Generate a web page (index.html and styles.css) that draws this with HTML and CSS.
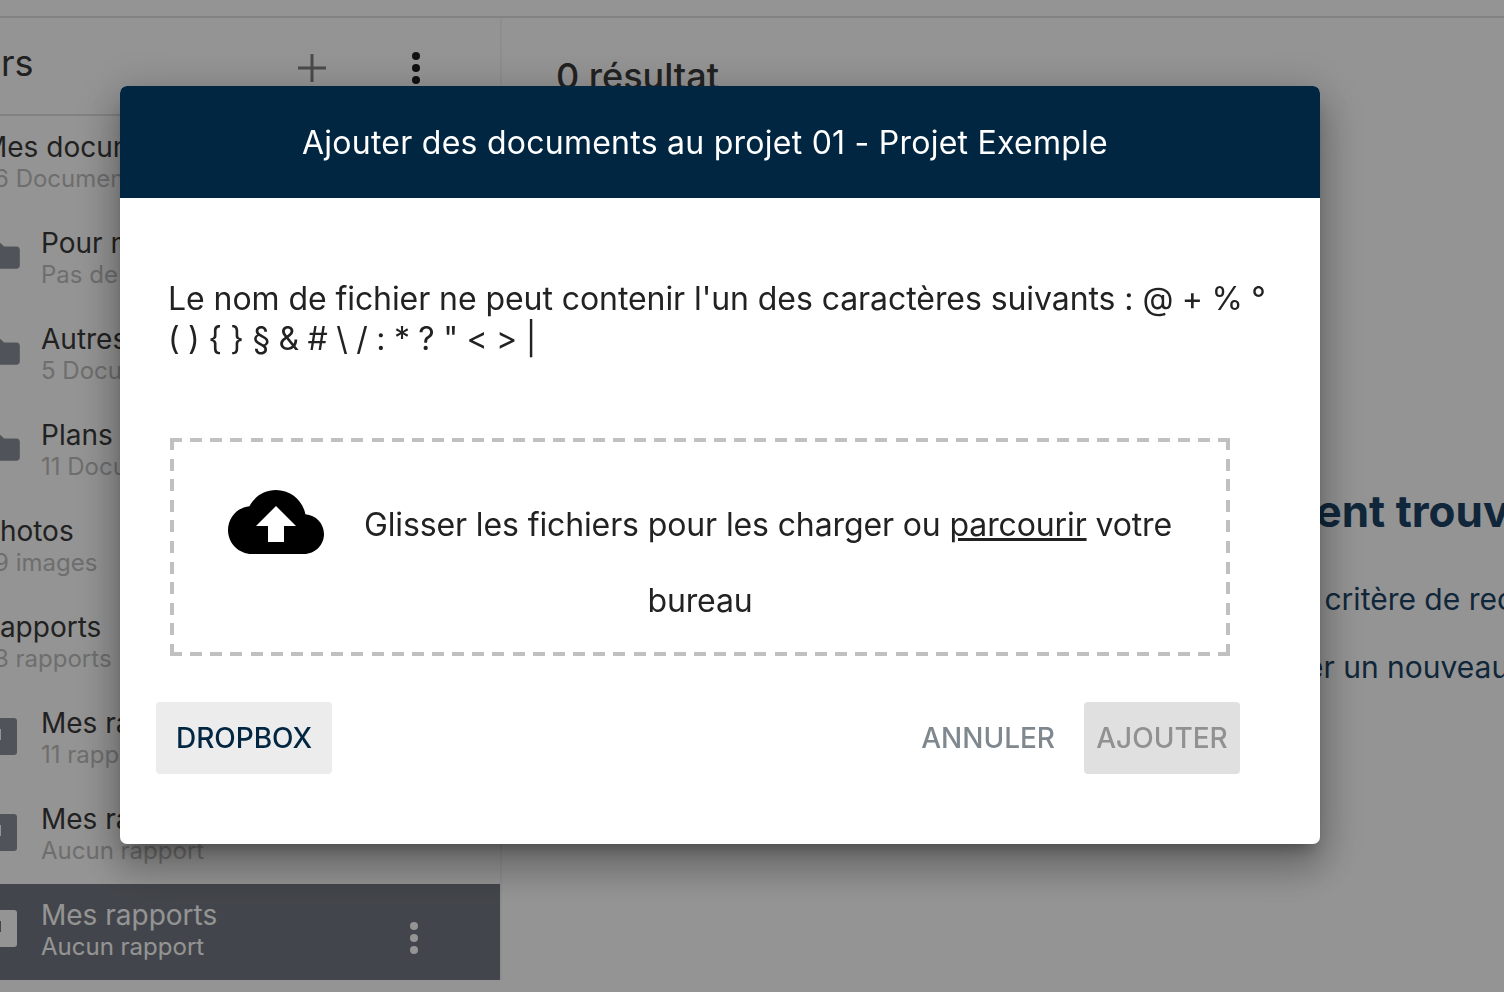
FILE: index.html
```html
<!DOCTYPE html>
<html>
  <head>
    <meta charset="utf-8">
    <link rel="stylesheet" href="styles.css">
  </head>
  <body>
    <div class="page">
      <div class="topbar"></div>
      <div class="columns">
        <div class="sidebar">
          <div class="side_head">
            <span class="side_title">Mes dossiers</span>
            <svg class="plus" viewBox="0 0 28 28"><path d="M12.5 0h3v12.5H28v3H15.5V28h-3V15.5H0v-3h12.5z"/></svg>
            <svg class="dots" viewBox="0 0 8 32"><circle cx="4" cy="4" r="4"/><circle cx="4" cy="16" r="4"/><circle cx="4" cy="28" r="4"/></svg>
          </div>
          <div class="row top">
            <div><div class="name">Mes documents</div><div class="sub">6 Documents</div></div>
          </div>
          <div class="row">
            <svg class="folder" viewBox="0 0 24 24"><path d="M10 4H4c-1.1 0-2 .9-2 2v12c0 1.1.9 2 2 2h16c1.1 0 2-.9 2-2V8c0-1.1-.9-2-2-2h-8l-2-2z"/></svg>
            <div><div class="name">Pour moi</div><div class="sub">Pas de document</div></div>
          </div>
          <div class="row">
            <svg class="folder" viewBox="0 0 24 24"><path d="M10 4H4c-1.1 0-2 .9-2 2v12c0 1.1.9 2 2 2h16c1.1 0 2-.9 2-2V8c0-1.1-.9-2-2-2h-8l-2-2z"/></svg>
            <div><div class="name">Autres documents</div><div class="sub">5 Documents</div></div>
          </div>
          <div class="row">
            <svg class="folder" viewBox="0 0 24 24"><path d="M10 4H4c-1.1 0-2 .9-2 2v12c0 1.1.9 2 2 2h16c1.1 0 2-.9 2-2V8c0-1.1-.9-2-2-2h-8l-2-2z"/></svg>
            <div><div class="name">Plans</div><div class="sub">11 Documents</div></div>
          </div>
          <div class="row top">
            <div><div class="name">Photos</div><div class="sub">9 images</div></div>
          </div>
          <div class="row top">
            <div><div class="name">Rapports</div><div class="sub">3 rapports</div></div>
          </div>
          <div class="row">
            <svg class="doc" viewBox="0 0 30 37"><rect width="30" height="37" rx="3"/><rect class="notch" y="11" width="14" height="11"/></svg>
            <div><div class="name">Mes rapports</div><div class="sub">11 rapports</div></div>
          </div>
          <div class="row">
            <svg class="doc" viewBox="0 0 30 37"><rect width="30" height="37" rx="3"/><rect class="notch" y="11" width="14" height="11"/></svg>
            <div><div class="name">Mes rapports</div><div class="sub">Aucun rapport</div></div>
          </div>
          <div class="row selected">
            <svg class="doc" viewBox="0 0 30 37"><rect width="30" height="37" rx="3"/><rect class="notch" y="11" width="14" height="11"/></svg>
            <div><div class="name">Mes rapports</div><div class="sub">Aucun rapport</div></div>
            <svg class="dots" viewBox="0 0 8 32"><circle cx="4" cy="4" r="4"/><circle cx="4" cy="16" r="4"/><circle cx="4" cy="28" r="4"/></svg>
          </div>
        </div>
        <div class="results">
          <div class="count">0 résultat</div>
          <div class="empty">
            <h2>Aucun document trouvé</h2>
            <p class="hint1">Essayez un autre critère de recherche</p>
            <p class="hint2">Vous pouvez ajouter un nouveau document</p>
          </div>
        </div>
      </div>
    </div>

    <div class="overlay">
      <div class="modal">
        <div class="modal_head">Ajouter des documents au projet 01 - Projet Exemple</div>
        <div class="modal_body">
          <p class="rules">Le nom de fichier ne peut contenir l'un des caractères suivants : <span class="chars">@ + % ° ( ) { } § &amp; # \ / : * ? " &lt; &gt; |</span></p>
          <div class="dropzone">
            <svg class="cloud" viewBox="0 0 24 24"><path d="M19.35 10.04C18.67 6.59 15.64 4 12 4 9.11 4 6.6 5.64 5.35 8.04 2.34 8.36 0 10.91 0 14c0 3.31 2.69 6 6 6h13c2.76 0 5-2.24 5-5 0-2.64-2.05-4.78-4.65-4.96zM14 13v4h-4v-4H7l5-5 5 5h-3z"/></svg>Glisser les fichiers pour les charger ou <u>parcourir</u> votre bureau
          </div>
        </div>
        <div class="modal_foot">
          <button class="btn_dropbox">DROPBOX</button>
          <div class="foot_right">
            <button class="btn_cancel">ANNULER</button>
            <button class="btn_add">AJOUTER</button>
          </div>
        </div>
      </div>
    </div>
  </body>
</html>
```

FILE: styles.css
```css
body {
  margin: 0;
  height: 100vh;
  overflow: hidden;
  background-color: white;
  font-family: Inter, sans-serif;
}

.page {
  margin-left: -120px;
  width: 1800px;
}

.topbar {
  height: 16px;
  border-bottom: 2px solid #e0e0e0;
}

.columns {
  display: flex;
}

.sidebar {
  width: 620px;
  flex-shrink: 0;
  border-right: 2px solid #f4f4f4;
}

.side_head {
  height: 96px;
  display: flex;
  align-items: center;
  border-bottom: 2px solid #e0e0e0;
}

.side_title {
  width: 418px;
  margin-left: -73px;
  margin-bottom: 6px;
  padding-right: 73px;
  font-size: 36px;
  color: #3a3a3a;
  white-space: nowrap;
}

.plus {
  width: 28px;
  height: 28px;
  fill: #808080;
  margin-top: 4px;
}

.side_head .dots {
  margin-left: 86px;
  margin-top: 4px;
  fill: #1c1c1c;
}

.dots {
  width: 8px;
  height: 32px;
  flex-shrink: 0;
}

.row {
  height: 96px;
  box-sizing: border-box;
  display: flex;
  align-items: center;
  padding: 0 82px 3px 105px;
  white-space: nowrap;
}

.row.top {
  padding-left: 102px;
}

.row.top .sub {
  margin-left: 12px;
}

.name {
  font-size: 28px;
  line-height: 33px;
  color: #3a3a3a;
}

.sub {
  font-size: 24px;
  line-height: 30px;
  color: #bebebe;
}

.folder {
  width: 38px;
  height: 38px;
  fill: #8a929b;
  margin-right: 18px;
  margin-bottom: 5px;
  flex-shrink: 0;
}

.doc {
  width: 30px;
  height: 37px;
  fill: #8a929b;
  margin: 0 24px 5px 2px;
  flex-shrink: 0;
}

.notch {
  fill: #fff;
}

.selected {
  background-color: #737881;
}

.selected .name,
.selected .sub {
  color: white;
}

.selected .doc {
  fill: white;
}

.selected .notch {
  fill: #737881;
}

.selected .dots {
  fill: white;
  margin-left: auto;
  margin-top: 15px;
}

.results {
  padding: 36px 0 0 54px;
  white-space: nowrap;
}

.count {
  font-size: 36px;
  font-weight: 500;
  color: #3a3a3a;
}

.empty {
  margin-top: 386px;
  padding-left: 460px;
  color: #1c4364;
}

.empty h2 {
  font-size: 44px;
  font-weight: 700;
  margin: 0 0 42px;
}

.empty p {
  font-size: 30px;
  line-height: 38px;
  margin: 0 0 30px;
}

.hint1 {
  padding-left: 59px;
}

.hint2 {
  padding-left: 29px;
}

.overlay {
  position: fixed;
  top: 0;
  left: 0;
  width: 100%;
  height: 100%;
  background-color: rgba(0, 0, 0, 0.42);
}

.modal {
  position: absolute;
  left: 120px;
  top: 86px;
  width: 1200px;
  height: 758px;
  background-color: white;
  border-radius: 7px;
  overflow: hidden;
  box-shadow: 0 11px 15px -7px rgba(0, 0, 0, 0.3), 0 24px 38px 3px rgba(0, 0, 0, 0.2), 0 9px 46px 8px rgba(0, 0, 0, 0.17);
}

.modal_head {
  height: 112px;
  line-height: 114px;
  background-color: #002642;
  color: white;
  font-size: 32px;
  letter-spacing: 0.25px;
  text-align: center;
  padding-right: 30px;
}

.modal_body {
  padding: 81px 42px 0 48px;
}

.rules {
  margin: 0;
  font-size: 32px;
  letter-spacing: -0.07px;
  line-height: 40px;
  color: #222;
}

.chars {
  letter-spacing: -0.28px;
}

.dropzone {
  box-sizing: border-box;
  width: 1060px;
  height: 218px;
  margin: 79px 0 0 2px;
  padding: 49px 54px 0;
  font-size: 32px;
  letter-spacing: -0.12px;
  line-height: 76px;
  color: #222;
  text-align: center;
  background-image:
    repeating-linear-gradient(90deg, #c0c0c0 0 12px, transparent 12px 20.154px),
    repeating-linear-gradient(90deg, #c0c0c0 0 12px, transparent 12px 20.154px),
    repeating-linear-gradient(180deg, #c0c0c0 0 12px, transparent 12px 20.6px),
    repeating-linear-gradient(180deg, #c0c0c0 0 12px, transparent 12px 20.6px);
  background-size: 100% 4px, 100% 4px, 4px 100%, 4px 100%;
  background-position: 0 0, 0 100%, 0 0, 100% 0;
  background-repeat: no-repeat;
}

.cloud {
  width: 96px;
  height: 96px;
  margin: -20px 40px -10px 0;
  vertical-align: middle;
}

.modal_foot {
  display: flex;
  justify-content: space-between;
  padding: 46px 80px 0 36px;
}

.foot_right {
  display: flex;
  gap: 17px;
}

button {
  height: 72px;
  border: 0;
  border-radius: 4px;
  font-family: Inter, sans-serif;
  font-size: 28px;
  font-weight: 500;
  padding: 0 12px;
  background: none;
}

.btn_dropbox {
  width: 176px;
  background-color: #ececec;
  color: #002642;
}

.btn_cancel {
  color: #7f888f;
}

.btn_add {
  width: 156px;
  background-color: #e0e0e0;
  color: #919191;
}
```
